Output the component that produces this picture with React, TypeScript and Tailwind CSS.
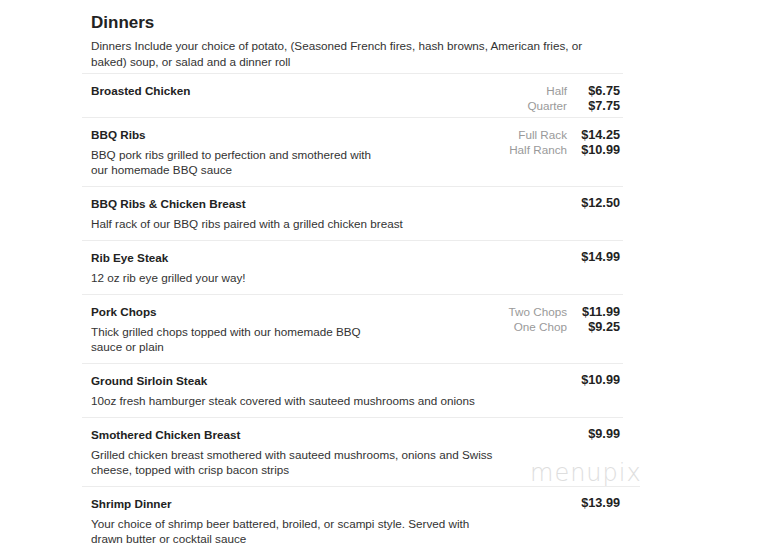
import React from 'react';

type Price = { label?: string; amount: string };
type Item = { name: string; desc?: string[]; prices: Price[] };

const items: Item[] = [
  {
    name: 'Broasted Chicken',
    prices: [
      { label: 'Half', amount: '$6.75' },
      { label: 'Quarter', amount: '$7.75' },
    ],
  },
  {
    name: 'BBQ Ribs',
    desc: ['BBQ pork ribs grilled to perfection and smothered with', 'our homemade BBQ sauce'],
    prices: [
      { label: 'Full Rack', amount: '$14.25' },
      { label: 'Half Ranch', amount: '$10.99' },
    ],
  },
  {
    name: 'BBQ Ribs & Chicken Breast',
    desc: ['Half rack of our BBQ ribs paired with a grilled chicken breast'],
    prices: [{ amount: '$12.50' }],
  },
  {
    name: 'Rib Eye Steak',
    desc: ['12 oz rib eye grilled your way!'],
    prices: [{ amount: '$14.99' }],
  },
  {
    name: 'Pork Chops',
    desc: ['Thick grilled chops topped with our homemade BBQ', 'sauce or plain'],
    prices: [
      { label: 'Two Chops', amount: '$11.99' },
      { label: 'One Chop', amount: '$9.25' },
    ],
  },
  {
    name: 'Ground Sirloin Steak',
    desc: ['10oz fresh hamburger steak covered with sauteed mushrooms and onions'],
    prices: [{ amount: '$10.99' }],
  },
  {
    name: 'Smothered Chicken Breast',
    desc: [
      'Grilled chicken breast smothered with sauteed mushrooms, onions and Swiss',
      'cheese, topped with crisp bacon strips',
    ],
    prices: [{ amount: '$9.99' }],
  },
  {
    name: 'Shrimp Dinner',
    desc: [
      'Your choice of shrimp beer battered, broiled, or scampi style. Served with',
      'drawn butter or cocktail sauce',
    ],
    prices: [{ amount: '$13.99' }],
  },
];

function MenuRow({ item }: { item: Item }) {
  const short = !item.desc;
  return (
    <div className={`flex items-start border-t border-[#ececec] pl-[9px] pr-[3px] pt-[9px] ${short ? 'h-[44px]' : 'pb-[9px]'}`}>
      <div className="flex-1">
        <div className="text-[11.7px] font-bold leading-[16px] text-[#222]">{item.name}</div>
        {item.desc && (
          <div className="mt-[4px] text-[11.7px] leading-[15px] text-[#333]">
            {item.desc.map((line) => (
              <div key={line}>{line}</div>
            ))}
          </div>
        )}
      </div>
      <div className="grid auto-rows-[15px] grid-cols-[auto_53px] items-baseline">
        {item.prices.map((p) => (
          <React.Fragment key={p.amount}>
            <span className="text-right text-[11.7px] leading-[15px] text-[#9a9a9a]">{p.label}</span>
            <span className="text-right text-[12.7px] font-bold leading-[15px] text-[#222]">{p.amount}</span>
          </React.Fragment>
        ))}
      </div>
    </div>
  );
}

export default function App() {
  return (
    <div className="relative min-h-[558px] w-[762px] overflow-hidden bg-white font-['Liberation_Sans',Arial,sans-serif]">
      <div className="ml-[82px] w-[541px] pt-[12px]">
        <h1 className="pl-[9px] text-[17px] font-bold leading-[22px] text-[#222]">Dinners</h1>
        <p className="pl-[9px] pt-[4px] pb-[3px] text-[11.7px] leading-[16px] text-[#333]">
          Dinners Include your choice of potato, (Seasoned French fires, hash browns, American fries, or
          <br />
          baked) soup, or salad and a dinner roll
        </p>
        {items.map((item) => (
          <MenuRow key={item.name} item={item} />
        ))}
      </div>

      {/* watermark */}
      <div className="pointer-events-none absolute left-[530px] top-[461px] text-[24px] font-light leading-[24px] tracking-[1px] text-[#dedede] font-['DejaVu_Sans',sans-serif]">
        menupix
      </div>
      <div className="pointer-events-none absolute left-[500px] top-[486px] h-px w-[140px] bg-[#ececec]" />
    </div>
  );
}
